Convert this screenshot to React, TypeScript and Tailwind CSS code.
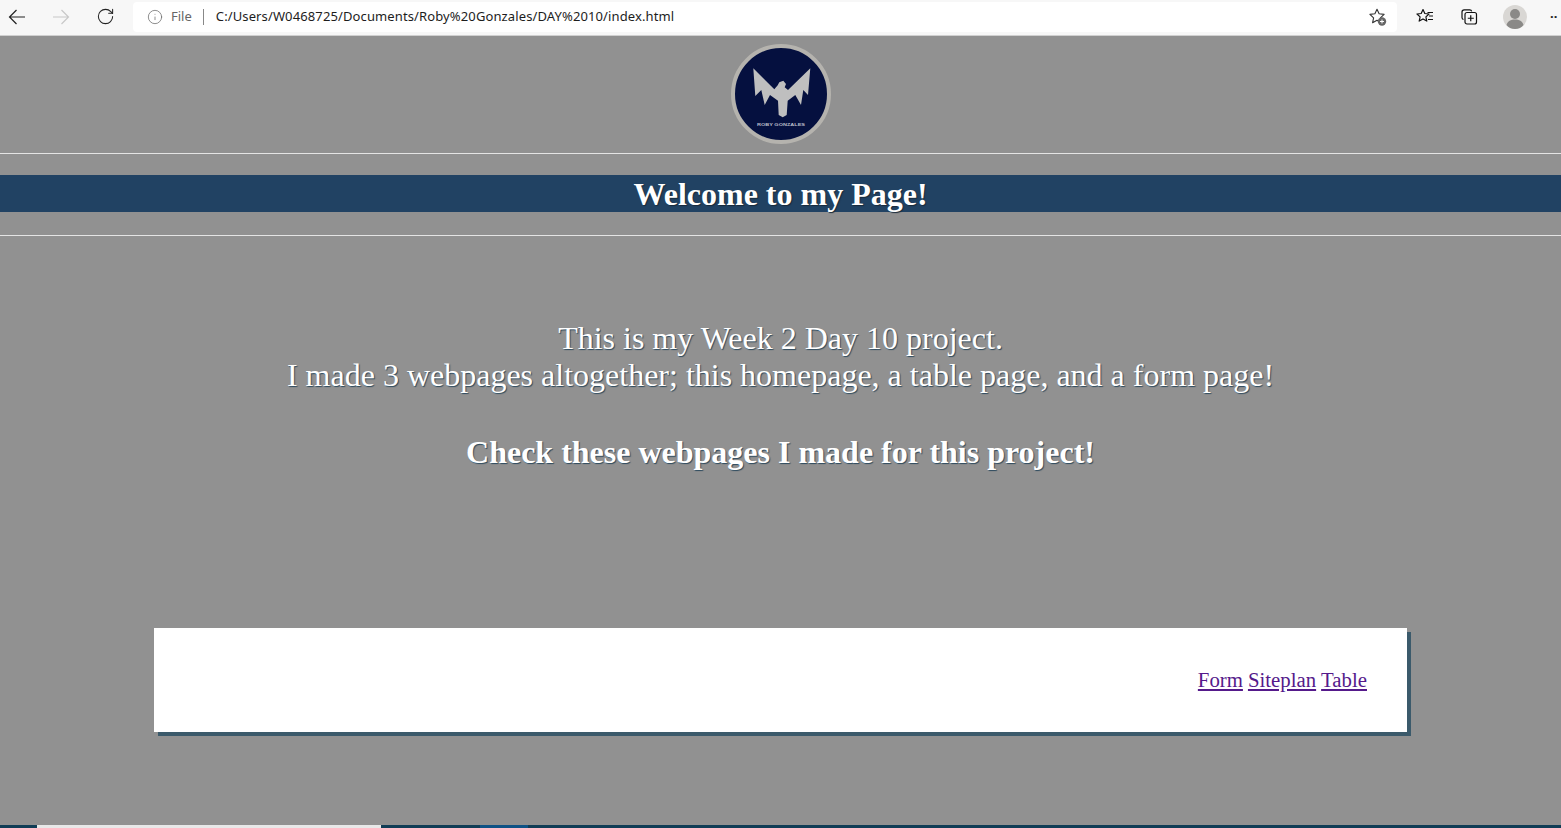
import { Info, RotateCw } from "lucide-react";

function ArrowIcon({ flip, color }: { flip?: boolean; color: string }) {
  return (
    <svg
      className={flip ? "-scale-x-100" : ""}
      width="20"
      height="20"
      viewBox="0 0 20 20"
      fill="none"
      stroke={color}
      strokeWidth="1.2"
    >
      <title>arrow</title>
      <path d="M18 10H2.500M9.500 3l-7 7 7 7" />
    </svg>
  );
}

function FavAddIcon() {
  return (
    <svg width="20" height="20" viewBox="0 0 20 20" fill="none">
      <title>add to favorites</title>
      <path
        d="M9 2.2l2.1 4.600 5 .6-3.700 3.400 1 4.900L9 13.200l-4.400 2.500 1-4.900L1.900 7.400l5-.6z"
        stroke="#333"
        strokeWidth="1.100"
        strokeLinejoin="round"
      />
      <circle cx="14" cy="14.500" r="4.200" fill="#666" />
      <path d="M14 12.500v4M12 14.500h4" stroke="#fff" strokeWidth="1" />
    </svg>
  );
}

function FavoritesIcon() {
  return (
    <svg width="20" height="20" viewBox="0 0 20 20" fill="none">
      <title>favorites</title>
      <path
        d="M8 2.500l1.800 4 4.200.5-3.100 2.900.9 4.200L8 11.900l-3.800 2.200.9-4.200L2 7l4.200-.5z"
        stroke="#111"
        strokeWidth="1.200"
        strokeLinejoin="round"
      />
      <path d="M12.500 5.500h5.500M14 9h4M13 12.500h5" stroke="#111" strokeWidth="1.200" />
    </svg>
  );
}

function CollectionsIcon() {
  return (
    <svg width="20" height="20" viewBox="0 0 20 20" fill="none">
      <title>collections</title>
      <path
        d="M4.500 12.500C3.500 12.300 3 11.600 3 10.500V5c0-1.300.9-2.200 2.200-2.200h5.500c1 0 1.800.5 2 1.500"
        stroke="#111"
        strokeWidth="1.200"
      />
      <rect x="6" y="5.500" width="11.500" height="11.500" rx="2" stroke="#111" strokeWidth="1.200" />
      <path d="M11.750 8.300v6M8.800 11.250h6" stroke="#111" strokeWidth="1.200" />
    </svg>
  );
}

function AvatarIcon() {
  return (
    <svg width="24" height="24" viewBox="0 0 24 24">
      <title>profile</title>
      <circle cx="12" cy="12" r="12" fill="#d9d7d4" />
      <circle cx="12" cy="9" r="5" fill="#8a8987" />
      <path d="M3.500 20c1-4.200 4.400-5.600 8.500-5.600s7.500 1.400 8.500 5.600c-2 2.500-5 4-8.500 4s-6.500-1.500-8.500-4z" fill="#8a8987" />
    </svg>
  );
}

function Logo() {
  return (
    <svg width="100" height="100" viewBox="0 0 100 100">
      <title>logo</title>
      <circle cx="50" cy="50" r="48" fill="#05103f" stroke="#b5b3ae" strokeWidth="4" />
      <polygon
        points="22.300,24.300 43.300,45.300 46.700,41.300 48.300,38.300 52.300,36.700 55,40 53.700,43.300 57,46 79.300,24.300 77,51 72.300,46 70,61 64.300,51 56.700,56.700 55.700,71 51.700,73.300 47.700,71 47,56.700 39,51 33.700,61 30.300,46 24.300,52"
        fill="#bfbfbf"
      />
      <text
        x="50"
        y="81.500"
        textAnchor="middle"
        textLength="48"
        lengthAdjust="spacingAndGlyphs"
        className="font-['Liberation_Sans',sans-serif] text-[4px] font-bold"
        fill="#b9bcc8"
      >
        ROBY GONZALES
      </text>
    </svg>
  );
}

function Toolbar() {
  return (
    <div className="flex h-9 shrink-0 items-center border-b border-[#d0d0d0] bg-[#f7f7f7] pb-[2px] font-['Noto_Sans',sans-serif]">
      <div className="flex w-[133px] shrink-0 items-center pl-[7px]">
        <ArrowIcon color="#222" />
        <div className="ml-6">
          <ArrowIcon flip color="#c8c8c8" />
        </div>
        <div className="ml-6 flex w-5 justify-center">
          <RotateCw size={19} strokeWidth={1.3} color="#222" />
        </div>
      </div>
      <div className="flex h-[30px] w-[1264px] shrink-0 items-center rounded-[4px] bg-white pl-[14px] pr-[9px]">
        <Info size={16} strokeWidth={1.1} color="#666" />
        <span className="ml-2 text-[13px] text-[#666]">File</span>
        <span className="ml-[11px] h-[16px] w-px bg-[#888]" />
        <span className="ml-3 text-[13px] tracking-[0.12px] text-[#1d1d1d]">
          C:/Users/W0468725/Documents/Roby%20Gonzales/DAY%2010/index.html
        </span>
        <span className="ml-auto flex">
          <FavAddIcon />
        </span>
      </div>
      <div className="flex flex-1 items-center overflow-hidden">
        <div className="ml-[18px] flex w-5 justify-center">
          <FavoritesIcon />
        </div>
        <div className="ml-6 flex w-5 justify-center">
          <CollectionsIcon />
        </div>
        <div className="ml-[24px] flex w-6 justify-center">
          <AvatarIcon />
        </div>
        <span className="ml-[23px] whitespace-nowrap text-[13px] font-bold leading-none text-[#222]">
          ··
        </span>
      </div>
    </div>
  );
}

export default function App() {
  return (
    <div className="flex h-screen flex-col overflow-hidden bg-[#919191] font-['Liberation_Serif',serif]">
      <Toolbar />
      <main className="flex-1">
        <div className="flex justify-center pt-2">
          <Logo />
        </div>
        <hr className="mt-[9px] border-t border-[#e4e4e4]" />
        <h1 className="mt-[21px] h-[37px] bg-[#214263] text-center text-[32px] font-bold leading-[39px] text-white [text-shadow:1px_1px_1px_#1a2a3a]">
          Welcome to my Page!
        </h1>
        <hr className="mt-[23px] border-t border-[#e4e4e4]" />
        <div className="mt-[84px] text-center text-[32px] leading-[37px] text-white [text-shadow:1px_1px_1px_#2d4a5e]">
          <p>This is my Week 2 Day 10 project.</p>
          <p>I made 3 webpages altogether; this homepage, a table page, and a form page!</p>
          <p className="mt-[40px] font-bold">Check these webpages I made for this project!</p>
        </div>
        <div className="mx-auto mt-[157px] flex h-[104px] w-[1253px] items-center justify-end bg-white pr-10 text-[20.8px] shadow-[4px_4px_0_#3b5a6b]">
          <a href="#form" className="text-[#551a8b] underline">Form</a>
          <a href="#siteplan" className="ml-[5px] text-[#551a8b] underline">Siteplan</a>
          <a href="#table" className="ml-[5px] text-[#551a8b] underline">Table</a>
        </div>
      </main>
      <div className="flex h-[3px] shrink-0 bg-[#103c55]">
        <div className="ml-[37px] w-[344px] bg-[#e8e8e8]" />
        <div className="ml-[99px] w-12 bg-[#0f5285]" />
      </div>
    </div>
  );
}
